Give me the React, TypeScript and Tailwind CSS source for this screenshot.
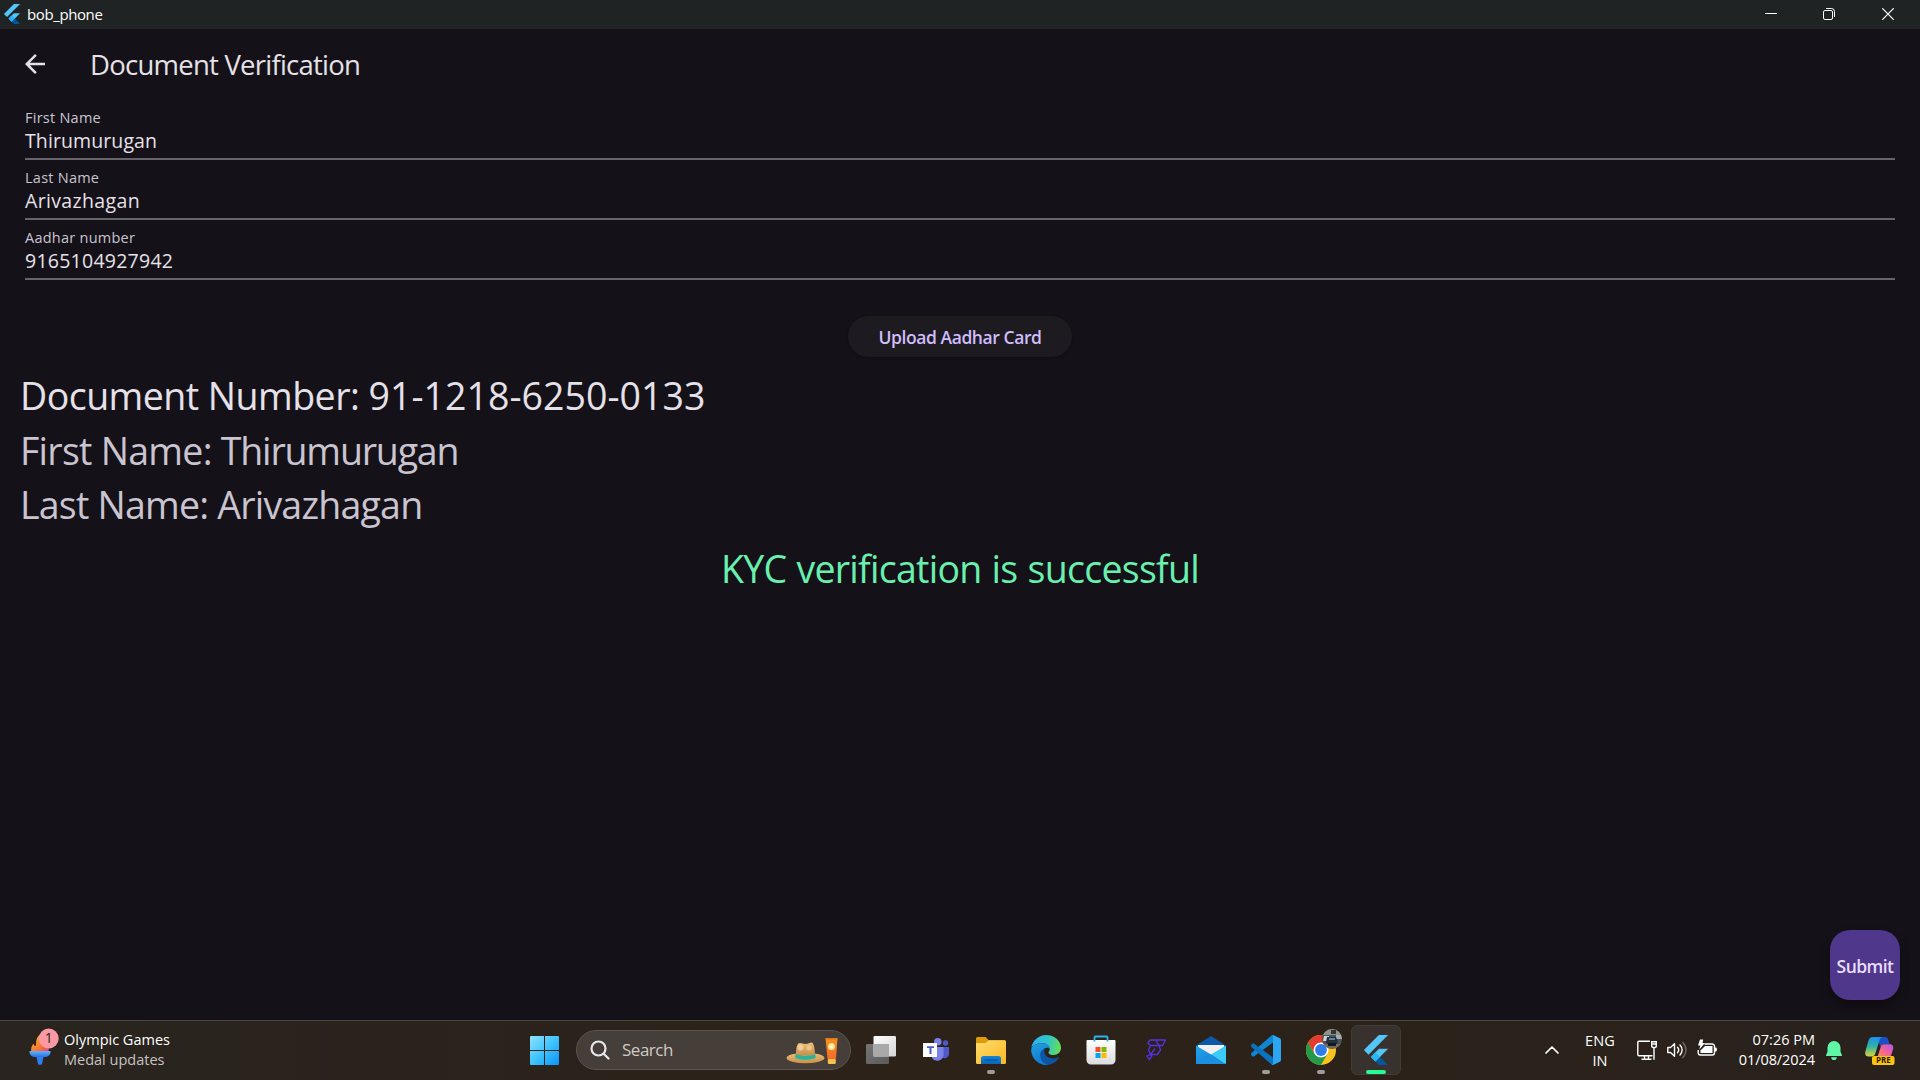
import type { ReactNode } from "react";

function FlutterLogo({ className }: { className: string }) {
  return (
    <svg viewBox="0 0 24 24" className={className}>
      <path fill="#54c5f8" d="M14.314 0 2.3 12 6 15.7 21.684.013z" />
      <path fill="#54c5f8" d="M14.328 11.072 7.857 17.53l3.693 3.69L21.7 11.072z" />
      <path fill="#01579b" d="m11.55 21.22 2.777 2.78H21.7l-6.46-6.47z" />
      <path fill="#29b6f6" d="m7.857 17.53 3.693-3.69 3.69 3.69-3.69 3.69z" />
    </svg>
  );
}

function TitleBar() {
  return (
    <header className="flex h-[29px] items-center bg-[#1f2324] pb-px pl-0.5 text-white">
      <FlutterLogo className="size-5" />
      <span className="ml-[5px] flex-1 text-[15px] leading-7 tracking-[-0.39px]">bob_phone</span>
      <svg viewBox="0 0 12 12" className="mr-[46px] h-3 w-3" fill="none" stroke="#fff">
        <path d="M0 5.5h12" />
      </svg>
      <svg viewBox="0 0 12 12" className="mr-[47px] h-3 w-3" fill="none" stroke="#fff">
        <rect x="0.5" y="2.5" width="9" height="9" rx="1.5" />
        <path d="M3 .5h5.5a3 3 0 0 1 3 3V9" />
      </svg>
      <svg viewBox="0 0 12 12" className="mr-[26px] h-3 w-3" fill="none" stroke="#fff" strokeWidth="1.2">
        <path d="m.3.3 11.4 11.4M11.7.3.3 11.7" />
      </svg>
    </header>
  );
}

function Field({ label, children }: { label: string; children: ReactNode }) {
  return (
    <div className="h-[60px] border-b-2 border-[#68646c] pt-2">
      <div className="text-[14.5px] leading-5 tracking-[0.25px] text-[#cac4d0]">{label}</div>
      <div className="text-[19.5px] leading-[26px] text-[#e6e1e9]">{children}</div>
    </div>
  );
}

function TaskCell({ children, running = false }: { children: ReactNode; running?: boolean }) {
  return (
    <div className="relative flex w-[55px] items-center justify-center">
      {children}
      {running && <div className="absolute bottom-[5px] h-1 w-2 rounded-full bg-[#a09c99]" />}
    </div>
  );
}

function WindowsIcon() {
  return (
    <svg viewBox="0 0 29 29" className="size-[29px]">
      <defs>
        <linearGradient id="win" x1="0" y1="0" x2="29" y2="29" gradientUnits="userSpaceOnUse">
          <stop offset="0" stopColor="#8fe3ff" />
          <stop offset=".5" stopColor="#3fc3fd" />
          <stop offset="1" stopColor="#0a93fb" />
        </linearGradient>
      </defs>
      <path fill="url(#win)" d="M1 0h13v14H0V1a1 1 0 0 1 1-1zM15 0h13a1 1 0 0 1 1 1v13H15zM0 15h14v14H1a1 1 0 0 1-1-1zM15 15h14v13a1 1 0 0 1-1 1H15z" />
    </svg>
  );
}

function SearchArt() {
  return (
    <svg viewBox="0 0 52 28" className="mt-px h-7 w-[52px]">
      <defs>
        <linearGradient id="hat" x1="0" y1="0" x2="0" y2="1">
          <stop offset="0" stopColor="#eec07c" />
          <stop offset="1" stopColor="#c98f48" />
        </linearGradient>
        <linearGradient id="tube" x1="0" y1="0" x2="0" y2="1">
          <stop offset="0" stopColor="#f7941e" />
          <stop offset="1" stopColor="#f26a2e" />
        </linearGradient>
      </defs>
      <ellipse cx="19.500" cy="21" rx="19" ry="5.200" fill="url(#hat)" />
      <path d="M10 18.500C10 12 10.500 6 14 6c2 0 3 1 5.500 1S24 5.500 25.500 5.500c2.500 0 3.500 7 3.500 13z" fill="url(#hat)" />
      <circle cx="14.500" cy="10.500" r="3" fill="#f6d9ac" opacity=".7" />
      <circle cx="23" cy="11" r="2.500" fill="#f6d9ac" opacity=".6" />
      <path d="M9.500 17c4 2.200 15.500 2.200 19.800 0l.3 4c-5 2.400-15.500 2.400-20.400 0z" fill="#2bb39a" />
      <path d="M39.500 1h12l-1.500 21h-8.500z" fill="url(#tube)" />
      <path d="M39.500 1h12l-.1 1.500H39.600z" fill="#d97a1a" />
      <rect x="41.800" y="22" width="8" height="5" rx="1.200" fill="#f8c24a" />
      <circle cx="45.500" cy="9.500" r="3.500" fill="#ffe08a" />
      <circle cx="45.500" cy="9.500" r="2" fill="#fff3c0" />
    </svg>
  );
}

function SearchBox() {
  return (
    <div className="ml-1 mr-[2.5px] flex h-10 w-[275px] items-center self-center rounded-full border border-[#5b534d] bg-[#463e39] pl-[13px] pr-[12px]">
      <svg viewBox="0 0 20 20" className="size-5" fill="none" stroke="#e4e9ee" strokeWidth="2.2" strokeLinecap="round">
        <circle cx="8.500" cy="8.500" r="7" />
        <path d="m13.700 13.700 4.800 4.800" />
      </svg>
      <span className="ml-3 flex-1 text-[17px] leading-6 tracking-[-0.48px] text-[#cfcbc8]">Search</span>
      <SearchArt />
    </div>
  );
}

function TaskViewIcon() {
  return (
    <svg viewBox="0 0 30 28" className="h-7 w-[30px]">
      <defs>
        <linearGradient id="tv" x1="0" y1="0" x2="1" y2="1">
          <stop offset="0" stopColor="#fff" />
          <stop offset="1" stopColor="#d4d4d4" />
        </linearGradient>
        <linearGradient id="tvb" x1="0" y1="0" x2="1" y2="1">
          <stop offset="0" stopColor="#757575" />
          <stop offset="1" stopColor="#5a5a5a" />
        </linearGradient>
      </defs>
      <rect x="0" y="8" width="23" height="20" rx="1.200" fill="url(#tvb)" />
      <rect x="7.500" y="0" width="22.500" height="20.500" rx="1.200" fill="url(#tv)" />
      <path d="M7.500 8H23v12.500H7.500z" fill="#a9a9a9" />
    </svg>
  );
}

function TeamsIcon() {
  return (
    <svg viewBox="0 0 26 24" className="h-6 w-[26px]">
      <circle cx="22.500" cy="5" r="2.700" fill="#5059c9" />
      <path d="M18 9h8v7a4.500 4.500 0 0 1-8 2.500z" fill="#5059c9" />
      <circle cx="14.800" cy="3.800" r="3.800" fill="#7b83eb" />
      <path d="M9 9h11.500v8a6.300 6.300 0 0 1-11.500 3z" fill="#7b83eb" />
      <rect x="0" y="5" width="14" height="14" fill="#fff" />
      <path d="M4 8.200h7v1.900H8.500V16h-2v-5.900H4z" fill="#5059c9" />
    </svg>
  );
}

function FolderIcon() {
  return (
    <svg viewBox="0 0 30 27" className="h-[27px] w-[30px]">
      <defs>
        <linearGradient id="fold" x1="0" y1="0" x2="1" y2="1">
          <stop offset="0" stopColor="#ffdc6c" />
          <stop offset="1" stopColor="#fcb823" />
        </linearGradient>
        <linearGradient id="dock" x1="0" y1="0" x2="0" y2="1">
          <stop offset="0" stopColor="#1684d6" />
          <stop offset="1" stopColor="#0c66b8" />
        </linearGradient>
      </defs>
      <path d="M0 1.500A1.500 1.500 0 0 1 1.500 0h8.200l3 3.300H28.500A1.500 1.500 0 0 1 30 4.800V12H0z" fill="#dd9a09" />
      <path d="M0 6h9.500l3.300-2.700h15.700A1.500 1.500 0 0 1 30 4.800V25.500a1.500 1.500 0 0 1-1.500 1.500h-27A1.500 1.500 0 0 1 0 25.500z" fill="url(#fold)" />
      <path d="M5 27v-5.500A2.500 2.500 0 0 1 7.500 19h15a2.500 2.500 0 0 1 2.500 2.500V27z" fill="url(#dock)" />
      <path d="M9 23h12" stroke="#0b4d8f" strokeWidth="1.200" strokeLinecap="round" />
    </svg>
  );
}

function EdgeIcon() {
  return (
    <svg viewBox="0 0 30 30" className="size-[30px]">
      <defs>
        <linearGradient id="edgeTop" x1="2" y1="8" x2="30" y2="14" gradientUnits="userSpaceOnUse">
          <stop offset="0" stopColor="#2fb3ee" />
          <stop offset=".5" stopColor="#2fc5c9" />
          <stop offset="1" stopColor="#6be04c" />
        </linearGradient>
        <linearGradient id="edgeLeft" x1="4" y1="8" x2="14" y2="30" gradientUnits="userSpaceOnUse">
          <stop offset="0" stopColor="#1f9de0" />
          <stop offset="1" stopColor="#1174cf" />
        </linearGradient>
      </defs>
      <path d="M.3 13C1.500 5.500 7.500 0 15.200 0 23.500 0 30 6 30 12.800c0 4.400-3.300 7.200-7.300 7.200-3.500 0-5.200-1.300-5.200-2.600 0-.8 1.200-1.200 1.200-3.400 0-3-3-5.700-7-5.700C6 8.300 1.800 10 .3 13z" fill="url(#edgeTop)" />
      <path d="M.2 14.500C.8 10.500 5.500 8.300 11.500 8.300c4.300 0 7.200 2.700 7.200 5.700-1-1.300-2.700-1.500-4-1-3 1.200-4.500 4-4.300 7.200.3 4.500 3.300 8.500 7.600 9.500A15 15 0 0 1 .2 14.500z" fill="url(#edgeLeft)" />
      <path d="M14.700 13c-2.400.7-5.700 3-5.500 7.800.2 4.300 4 9.700 10 8.600 4-.9 7-3.400 8.600-6.300.3-.6-.2-1-.7-.7-5.300 2.500-13.100.5-13.700-5.400-.2-1.700.3-3 1.300-4z" fill="#0d55a3" />
    </svg>
  );
}

function StoreIcon() {
  return (
    <svg viewBox="0 0 30 30" className="size-[30px]">
      <defs>
        <linearGradient id="bag" x1="0" y1="0" x2="0" y2="1">
          <stop offset="0" stopColor="#fff" />
          <stop offset="1" stopColor="#dcdcdc" />
        </linearGradient>
      </defs>
      <path d="M1.500 5h27a1 1 0 0 1 1 1v19a4.500 4.500 0 0 1-4.500 4.500H5A4.500 4.500 0 0 1 .5 25V6a1 1 0 0 1 1-1z" fill="url(#bag)" />
      <path d="M8.500 6.500V2.300c0-.5.4-.8.8-.8h11.400c.5 0 .8.300.8.8v4.200" fill="none" stroke="#28b4ef" strokeWidth="1.800" />
      <path d="M9.500 12h5v5h-5z" fill="#f25022" />
      <path d="M15.500 12h5v5h-5z" fill="#7fba00" />
      <path d="M9.500 18h5v5h-5z" fill="#00a4ef" />
      <path d="M15.500 18h5v5h-5z" fill="#ffb900" />
    </svg>
  );
}

function FlowIcon() {
  return (
    <svg viewBox="0 0 20 22" className="h-[22px] w-5" fill="none" stroke="#5433e0" strokeWidth="1.300" strokeLinejoin="round">
      <path d="M4 1h15.300l-2.600 5.500H13L9.700 1M4 1 1.800 3.800l2.500 2.700H13M4.500 6.500 2.500 11l2 4.500h6.800l3.200-4.500L13 6.500M4.500 15.500 9 9.500M.8 17l3.700-1.500 1.300 1.700-2.500 3.500z" />
    </svg>
  );
}

function MailIcon() {
  return (
    <svg viewBox="0 0 30 28" className="h-7 w-[30px]">
      <defs>
        <linearGradient id="mail" x1="0" y1="0" x2="1" y2="1">
          <stop offset="0" stopColor="#1fa5ec" />
          <stop offset="1" stopColor="#1479d2" />
        </linearGradient>
      </defs>
      <path d="M0 9.500 15 0l15 9.500V14H0z" fill="#0b59a8" />
      <path d="M2 9h26v4L15 20 2 13z" fill="#f3f1ef" />
      <path d="M0 9.500v17.500a1 1 0 0 0 1 1h28L15 18.500z" fill="url(#mail)" />
      <path d="M30 9.500V27a1 1 0 0 1-1 1L15 18.500z" fill="#3bcbf6" />
      <path d="M0 27c0 .6.400 1 1 1h28L15 18.500z" fill="#1c8fe0" />
    </svg>
  );
}

function CodeIcon() {
  return (
    <svg viewBox="0 0 30 30" className="size-[30px]">
      <path d="M22 7.500 3.200 21.300a1.500 1.500 0 0 1-1.900-.1L.4 20a1.300 1.300 0 0 1 0-1.900L20.500.6C21 .2 21.600 0 22 0z" fill="#0f86d3" />
      <path d="M22 22.500 3.200 8.700a1.500 1.500 0 0 0-1.900.1L.4 10a1.300 1.300 0 0 0 0 1.900l20.100 17.500c.5.400 1.100.6 1.500.6z" fill="#0a72be" />
      <path d="M21.800 0c.3 0 .5.100.8.200l6.300 3c.7.300 1.100 1 1.100 1.700v20.200c0 .7-.4 1.400-1.100 1.700l-6.300 3c-.7.300-1.500.2-2-.4.700.6 1.400.2 1.400-.9V1.500C22 .5 21.300 0 20.600.6c.3-.4.700-.6 1.200-.6z" fill="#2ca6f2" />
    </svg>
  );
}

function ChromeIcon() {
  return (
    <div className="relative">
      <svg viewBox="0 0 30 30" className="size-[30px]">
        <circle cx="15" cy="15" r="15" fill="#fcc31e" />
        <path d="M2 7.500A15 15 0 0 0 15 30l6.500-11.300L15 15 8.500 18.700z" fill="#249a49" />
        <path d="M2 7.500A15 15 0 0 1 28 7.500H15L8.500 18.700z" fill="#e33b2e" />
        <circle cx="15" cy="15" r="7.500" fill="#fff" />
        <circle cx="15" cy="15" r="5.900" fill="#2f7cec" />
      </svg>
      <svg viewBox="0 0 20 20" className="absolute -right-1.5 -top-1.5 size-5">
        <defs>
          <clipPath id="avatar">
            <circle cx="10" cy="10" r="10" />
          </clipPath>
        </defs>
        <g clipPath="url(#avatar)">
          <path d="M0 0h20v20H0z" fill="#4b5358" />
          <path d="M0 0h20v6H0z" fill="#8e9390" />
          <path d="M9 1h5v4H9z" fill="#3a342f" />
          <path d="M2 7h5v5H1z" fill="#cfd6d8" />
          <path d="M14 6h6v4h-6z" fill="#a6adb0" />
          <path d="M5 8h9l2 5-2 4H6l-2-4z" fill="#23313b" />
          <path d="M7 9h6v2H7z" fill="#5f87a0" />
          <path d="M0 15h20v5H0z" fill="#6f6a63" />
          <path d="M6 14h8v3H6z" fill="#15191c" />
        </g>
      </svg>
    </div>
  );
}

function Taskbar() {
  return (
    <footer className="flex h-[60px] border-t border-[#4b4642] bg-linear-to-r from-[#29241f] via-[#2c2218] to-[#29211c] pb-px">
      <div className="flex w-[517px] items-center pl-[29px]">
        <svg viewBox="0 0 30 38" className="-mt-1.5 h-[38px] w-[30px] overflow-visible">
          <defs>
            <linearGradient id="flame" x1="0" y1="0" x2="1" y2="1">
              <stop offset="0" stopColor="#fdb52a" />
              <stop offset=".6" stopColor="#f9782f" />
              <stop offset="1" stopColor="#e8398f" />
            </linearGradient>
            <linearGradient id="cup" x1="0" y1="0" x2="0" y2="1">
              <stop offset="0" stopColor="#5fb4fb" />
              <stop offset="1" stopColor="#2a72e0" />
            </linearGradient>
          </defs>
          <path d="M2.500 24C1.500 20 3 17.500 4.800 15.500c0 1.500.5 2.500 1.500 2.500 1.800 0-.8-6 3.500-10.500L20 18l-.5 6z" fill="url(#flame)" />
          <path d="M1.200 23h19.600c.5 0 .8.400.8.900-.3 3.200-3 5.100-5.600 5.100h-10C3.300 29 .7 27 .4 23.900c0-.5.300-.9.800-.9z" fill="url(#cup)" />
          <path d="M7.500 29h7L13 36a1 1 0 0 1-1 .8h-2A1 1 0 0 1 9 36z" fill="#2f7cf0" />
          <circle cx="19.700" cy="10.500" r="10" fill="#ff99a4" />
          <text x="19.700" y="15.300" textAnchor="middle" fontSize="14" fill="#2a1d1c" className="font-['Open_Sans',sans-serif]">1</text>
        </svg>
        <div className="ml-[5px] text-[14.5px] leading-5">
          <div className="text-white">Olympic Games</div>
          <div className="text-[#c6c3c0]">Medal updates</div>
        </div>
      </div>

      <TaskCell><WindowsIcon /></TaskCell>
      <SearchBox />
      <TaskCell><TaskViewIcon /></TaskCell>
      <TaskCell><TeamsIcon /></TaskCell>
      <TaskCell running><FolderIcon /></TaskCell>
      <TaskCell><EdgeIcon /></TaskCell>
      <TaskCell><StoreIcon /></TaskCell>
      <TaskCell><FlowIcon /></TaskCell>
      <TaskCell><MailIcon /></TaskCell>
      <TaskCell running><CodeIcon /></TaskCell>
      <TaskCell running><ChromeIcon /></TaskCell>
      <div className="relative flex w-[55px] items-center justify-center">
        <div className="flex h-[50px] w-[50px] items-center justify-center rounded-md border border-[#423b37] bg-[#38312d]">
          <FlutterLogo className="size-[30px]" />
        </div>
        <div className="absolute bottom-[5px] h-1 w-5 rounded-full bg-[#26fa8d]" />
      </div>

      <div className="flex flex-1 items-center justify-end pr-[25px] text-[14.5px] leading-5 text-white">
        <svg viewBox="0 0 14 8" className="h-2 w-3.5" fill="none" stroke="#fff" strokeWidth="1.700" strokeLinecap="round" strokeLinejoin="round">
          <path d="m1 7 6-6 6 6" />
        </svg>
        <div className="ml-[25px] w-8 pt-0.5 text-center">
          <div className="tracking-[0.2px]">ENG</div>
          <div>IN</div>
        </div>
        <svg viewBox="0 0 20 20" className="ml-[21px] size-5" fill="none" stroke="#fff" strokeWidth="1.400">
          <path d="M13 1.200H2A1.300 1.300 0 0 0 .8 2.500v12A1.300 1.300 0 0 0 2 15.800h13.500M4.500 19.300h10M7.500 16v3M11.500 16v3" />
          <path d="M14.700 1.800h4.600V6a1.500 1.500 0 0 1-1.500 1.500h-1.600A1.500 1.500 0 0 1 14.700 6zM14.700 4h4.600M17 7.500V19.800" />
        </svg>
        <svg viewBox="0 0 20 18" className="ml-[10px] h-[18px] w-5" fill="none" stroke="#fff" strokeWidth="1.400" strokeLinecap="round" strokeLinejoin="round">
          <path d="M.8 6.500v5h2.700l4 3.700V2.800l-4 3.700z" />
          <path d="M10.500 6.300a4 4 0 0 1 0 5.400M13 4a7 7 0 0 1 0 10" />
          <path d="M15.800 1.500a10.500 10.500 0 0 1 0 15" stroke="#6d6865" />
        </svg>
        <svg viewBox="0 0 20 18" className="mb-1 ml-[10px] h-[18px] w-5">
          <path d="M7.500 5h7.700A2.300 2.300 0 0 1 17.500 7.300v6.400a2.300 2.300 0 0 1-2.300 2.300H3.500a2.300 2.300 0 0 1-2.300-2.300V11" fill="none" stroke="#fff" strokeWidth="1.400" />
          <path d="M8 7h7.500v7h-12v-2.500z" fill="#fff" />
          <path d="M18 8.500h.8a1 1 0 0 1 1 1v2a1 1 0 0 1-1 1H18z" fill="#fff" />
          <path d="M3 .5h3.200L5.500 4H8L2.300 10.500 3.300 6.500H1z" fill="#fff" />
        </svg>
        <div className="ml-[20px] w-[78px] text-right">
          <div>07:26 PM</div>
          <div className="whitespace-nowrap tracking-[-0.07px]">01/08/2024</div>
        </div>
        <svg viewBox="0 0 16 19" className="ml-[11px] h-[19px] w-4" fill="#5ff7a6">
          <path d="M8 0a6.500 6.500 0 0 1 6.500 6.500v4.300l1.400 3.300c.2.500-.1.900-.6.900H.7c-.5 0-.8-.4-.6-.9l1.400-3.300V6.500A6.500 6.500 0 0 1 8 0zM5.200 16.200h5.600a2.800 2.800 0 0 1-5.600 0z" />
        </svg>
        <svg viewBox="0 0 30 28" className="ml-[23px] mt-0.5 h-7 w-[30px]">
          <defs>
            <linearGradient id="cpA" x1="0" y1="0" x2="0" y2="1">
              <stop offset="0" stopColor="#1d8df0" />
              <stop offset=".5" stopColor="#35b5a0" />
              <stop offset="1" stopColor="#d9d43a" />
            </linearGradient>
            <linearGradient id="cpB" x1="1" y1="0" x2="0" y2="1">
              <stop offset="0" stopColor="#a95cf0" />
              <stop offset=".5" stopColor="#f0619a" />
              <stop offset="1" stopColor="#fb8d52" />
            </linearGradient>
          </defs>
          <path d="M12 0h8c2 0 2.800 1.200 3.400 3.300L24.500 7H19c-2 0-3 1-3.600 3z" fill="#1c50c8" />
          <path d="M7.500 0H18c-2 0-3 1.500-3.600 3.500L10.500 16c-.8 2.500-1.800 3.500-4 3.500H3.700C.8 19.500-.3 17.500.3 14.800L3.500 3.600C4.200 1.300 5.500 0 7.500 0z" fill="url(#cpA)" />
          <path d="M19 7.300h5.500c3 0 4.300 2 3.600 4.700l-2.500 8H12.500l3.200-10c.6-2 1.500-2.700 3.300-2.700z" fill="url(#cpB)" />
          <rect x="7" y="19" width="22.500" height="9" rx="2" fill="#ffc20e" />
          <text x="18.300" y="26.400" textAnchor="middle" fontSize="8" fontWeight="700" fill="#2b2100" className="font-['Open_Sans',sans-serif]">PRE</text>
        </svg>
      </div>
    </footer>
  );
}

export default function App() {
  return (
    <div className="flex h-[1080px] w-[1920px] flex-col overflow-hidden bg-[#141218] font-['Open_Sans','Noto_Sans',sans-serif]">
      <TitleBar />
      <div className="flex h-[71px] items-center pl-5 text-[#e6e1e9]">
        <svg viewBox="0 0 24 24" className="mb-px size-[30px]" fill="#e6e1e9">
          <path d="M20 11H7.830l5.590-5.590L12 4l-8 8 8 8 1.410-1.410L7.830 13H20v-2z" />
        </svg>
        <h1 className="ml-10 text-[27.5px] leading-9 tracking-[-0.76px]">Document Verification</h1>
      </div>

      <main className="flex flex-1 flex-col">
        <div className="px-[25px]">
          <Field label="First Name"><span className="tracking-[0.1px]">Thirumurugan</span></Field>
          <Field label="Last Name"><span className="tracking-[0.35px]">Arivazhagan</span></Field>
          <Field label="Aadhar number"><span className="tracking-[0.25px]">9165104927942</span></Field>
        </div>

        <button className="mt-9 flex h-[41px] w-[224px] items-center justify-center self-center rounded-full bg-[#1d1b20] pt-px text-[17.5px] font-semibold leading-6 tracking-[-0.42px] text-[#d0bcff] shadow-[0_1px_2px_rgba(0,0,0,0.25)]">
          Upload Aadhar Card
        </button>

        <div className="mt-3 pl-5 text-[37.5px] leading-[54.5px] text-[#cac4d0]">
          <div className="text-[#e6e1e9]">
            <span className="tracking-[-0.53px]">Document Number: </span>
            <span className="tracking-[0.04px]">91-1218-6250-0133</span>
          </div>
          <div>
            <span className="tracking-[-0.73px]">First Name: </span>
            <span className="tracking-[-1.18px]">Thirumurugan</span>
          </div>
          <div className="tracking-[-0.78px]">Last Name: Arivazhagan</div>
        </div>
        <div className="mt-[9px] text-center text-[37.5px] leading-[54.5px] tracking-[-0.72px] text-[#69f0ae] [word-spacing:1px]">
          KYC verification is successful
        </div>

        <button className="mb-5 mr-5 mt-auto flex size-[70px] items-center justify-center self-end rounded-[20px] bg-[#4f378b] pt-0.5 text-[17.5px] font-semibold tracking-[-0.54px] text-[#eaddff] shadow-[0_6px_10px_rgba(0,0,0,0.35)]">
          Submit
        </button>
      </main>

      <Taskbar />
    </div>
  );
}
